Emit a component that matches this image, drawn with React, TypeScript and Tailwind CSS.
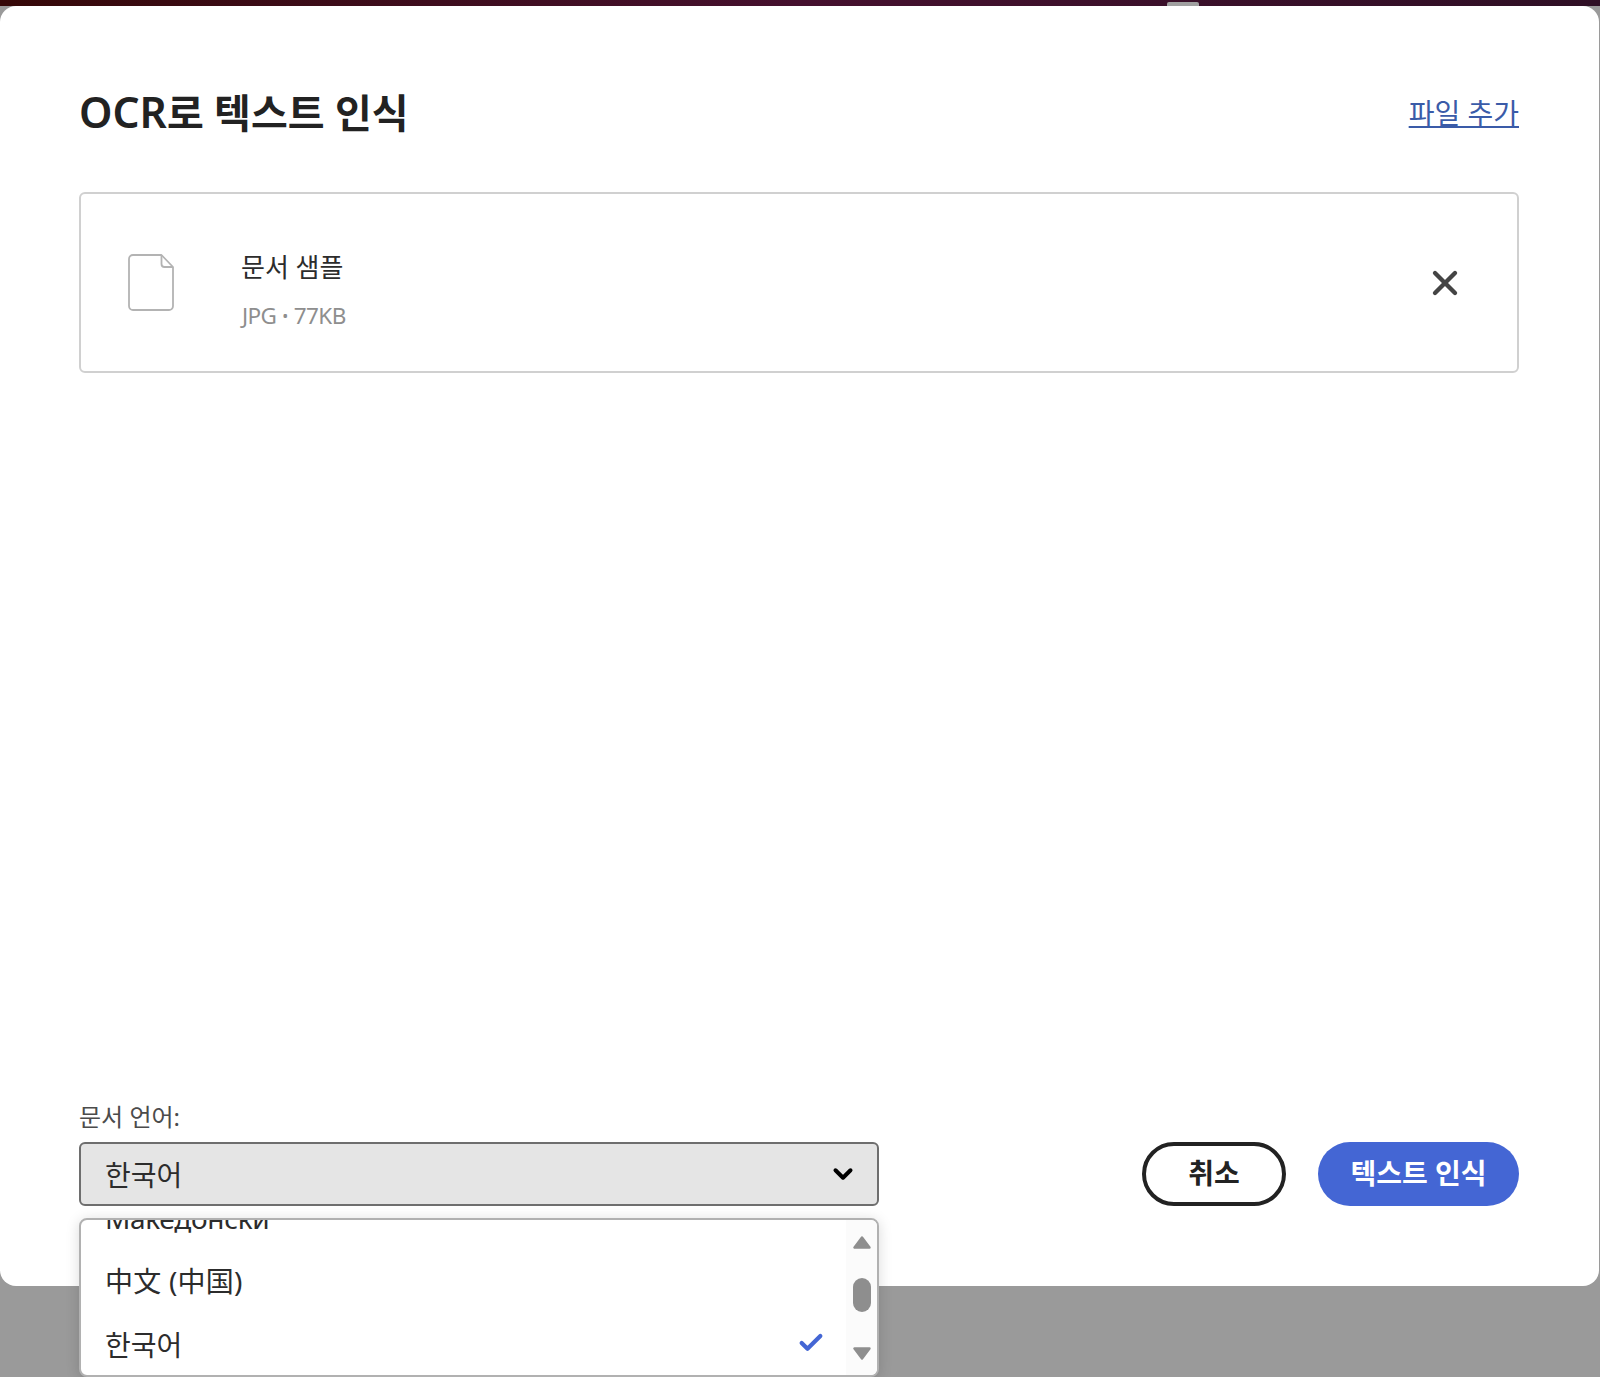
import { Check, ChevronDown, X } from "lucide-react"

const sans = "font-['Noto_Sans','Noto_Sans_CJK_KR',sans-serif]"

function FileIcon() {
  return (
    <svg width="46" height="57" viewBox="0 0 46 57" fill="none" stroke="#b3b3b3" strokeWidth="1.8">
      <path d="M5 1h28.5L45 13v39a4 4 0 0 1-4 4H5a4 4 0 0 1-4-4V5a4 4 0 0 1 4-4z" strokeLinejoin="round" />
      <path d="M33.5 1v9a3 3 0 0 0 3 3H45" strokeLinejoin="round" />
    </svg>
  )
}

function ScrollArrow({ down = false }: { down?: boolean }) {
  return (
    <svg width="18" height="13" viewBox="0 0 18 13" fill="#8e8e8e" stroke="#8e8e8e" strokeWidth="2.4" strokeLinejoin="round">
      <path d={down ? "M1.5 1.5h15L9 11.5z" : "M1.5 11.5h15L9 1.5z"} />
    </svg>
  )
}

function LanguageList() {
  return (
    <div className="absolute left-[79px] top-[1218px] flex h-[159px] w-[800px] overflow-hidden rounded-[8px] border-2 border-[#b1b1b1] bg-white shadow-[0_2px_14px_rgba(0,0,0,0.15)]">
      <div className="relative flex-1 overflow-hidden">
        <div className="absolute -top-[22px] left-[24px] text-[28px] leading-[40px] tracking-[-0.3px] text-[#2c2c2c]">Македонски</div>
        <div className="absolute left-[24px] top-[41px] text-[28px] leading-[40px] tracking-[0.2px] text-[#2c2c2c]">中文 (中国)</div>
        <div className="absolute left-[24px] top-[105px] text-[28px] leading-[40px] text-[#2c2c2c]">한국어</div>
        <Check className="absolute left-[716px] top-[109px] text-[#4466d4]" size={28} strokeWidth={3.6} />
      </div>
      <div className="flex w-[31px] flex-col items-center bg-[#fbfbfb] pt-[16px]">
        <ScrollArrow />
        <div className="mt-[29px] h-[34px] w-[18px] rounded-[9px] bg-[#8e8e8e]" />
        <div className="mt-[35px] flex">
          <ScrollArrow down />
        </div>
      </div>
    </div>
  )
}

export default function App() {
  return (
    <div className={`relative flex h-[1377px] w-full flex-col overflow-hidden bg-[#9a9a9a] ${sans}`}>
      <div className="relative h-[6px] shrink-0 bg-gradient-to-r from-[#360808] via-[#45102e] to-[#2f0f25]">
        <div className="absolute left-[1167px] top-[2px] h-[4px] w-[32px] rounded-t-[2px] bg-[#a0a0a0]" />
      </div>
      <div className="mr-px flex h-[1280px] flex-col rounded-[16px] bg-white pl-[79px] pr-[80px]">
        <div className="flex h-[134px] items-center justify-between pt-[80px]">
          <h1 className="text-[40px] font-bold leading-[56px] text-[#222222]">
            <span className="text-[42.5px] font-semibold leading-none">OCR</span>로 텍스트 인식
          </h1>
          <a className="text-[28px] leading-[40px] text-[#3a5ba8] underline">파일 추가</a>
        </div>
        <div className="mt-[52px] flex h-[181px] items-center rounded-[6px] border-2 border-[#d0d0d0] pl-[47px] pr-[52px]">
          <FileIcon />
          <div className="ml-[67px] mt-[16px] flex flex-1 flex-col">
            <span className="text-[26px] leading-[36px] text-[#2c2c2c]">문서 샘플</span>
            <span className="mt-[15px] flex items-center pl-px text-[22.5px] leading-[32px] tracking-[-0.6px] text-[#8e8e8e]">
              JPG<span className="mx-[6px] text-[16px]">•</span>77KB
            </span>
          </div>
          <X size={40} strokeWidth={2.6} className="text-[#444444]" />
        </div>
        <div className="mt-auto flex items-end justify-between pb-[80px]">
          <div>
            <div className="mb-[8px] text-[24px] leading-[34px] text-[#4b4b4b]">문서 언어:</div>
            <div className="flex h-[64px] w-[800px] items-center justify-between rounded-[6px] border-2 border-[#6e6e6e] bg-[#e5e5e5] pl-[24px] pr-[19px]">
              <span className="pt-[2px] text-[28px] leading-[40px] text-[#2c2c2c]">한국어</span>
              <ChevronDown size={30} strokeWidth={3.2} className="text-black" />
            </div>
          </div>
          <div className="flex gap-[32px]">
            <button className="h-[64px] w-[144px] rounded-full border-4 border-[#222222] bg-white pb-[2px] text-[28px] font-bold text-[#222222]">취소</button>
            <button className="h-[64px] w-[201px] rounded-full bg-[#4466d4] pb-[2px] text-[28px] font-bold text-white">텍스트 인식</button>
          </div>
        </div>
      </div>
      <LanguageList />
    </div>
  )
}
